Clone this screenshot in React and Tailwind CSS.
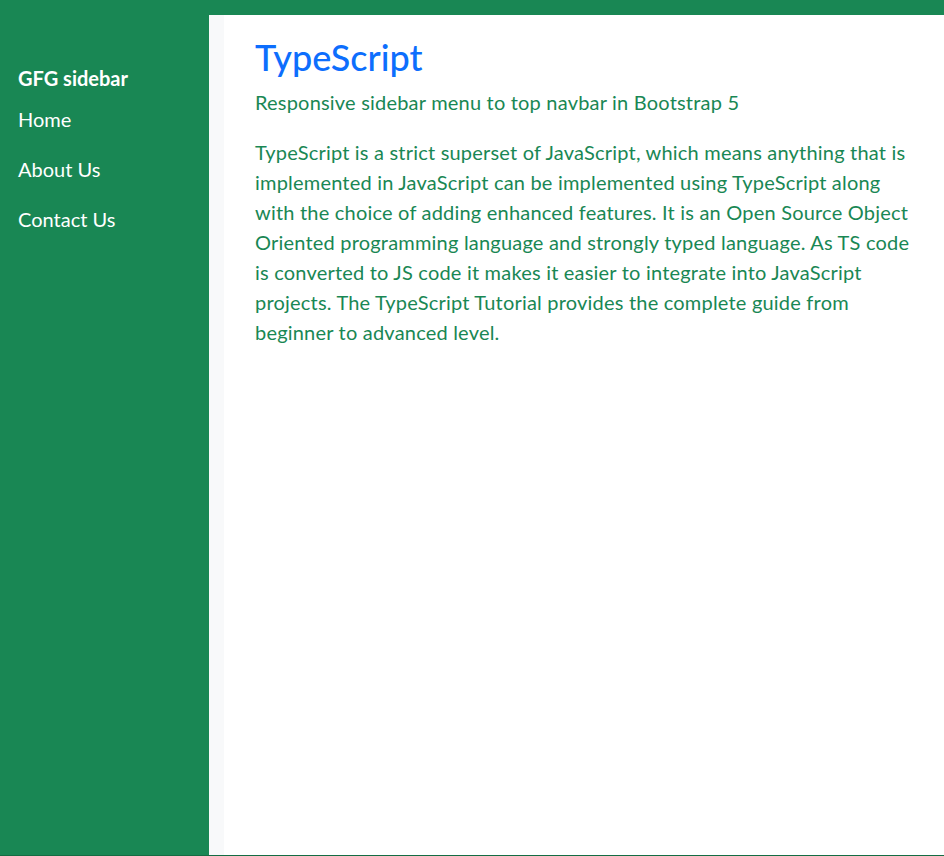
export default function App() {
  return (
    <div
      className="h-[856px] w-full flex flex-col bg-[#198754] border-b border-black/20"
      style={{ fontFamily: '"Lato", "Noto Sans", sans-serif' }}
    >
      <div className="h-[15px] shrink-0" />
      <div className="flex flex-1 min-h-0">
        {/* Sidebar */}
        <aside className="w-[209px] shrink-0 px-[18px] pt-[49px] text-white">
          <h5 className="text-[20px] font-bold leading-[28px] mb-[3px]">GFG sidebar</h5>
          <nav className="flex flex-col">
            <a href="#" className="text-[20px] leading-[30px] py-[10px] -mt-[1px]">Home</a>
            <a href="#" className="text-[20px] leading-[30px] py-[10px]">About Us</a>
            <a href="#" className="text-[20px] leading-[30px] py-[10px]">Contact Us</a>
          </nav>
        </aside>

        {/* Main */}
        <main className="flex-1 flex">
          <div className="w-[15px] bg-[#f8f9fa]" />
          <div className="flex-1 bg-white pl-[31px] pr-[30px] pt-[21px] tracking-[0.2px]">
            <h1 className="text-[36px] leading-[43px] text-[#0d6efd] font-medium tracking-normal mb-[8px]">TypeScript</h1>
            <p className="text-[20px] leading-[30px] text-[#198754] mb-[20px]">
              Responsive sidebar menu to top navbar in Bootstrap 5
            </p>
            <p className="text-[20px] leading-[30px] text-[#198754] max-w-[658px]">
              TypeScript is a strict superset of JavaScript, which means anything that is implemented in JavaScript can be implemented using TypeScript along with the choice of adding enhanced features. It is an Open Source Object Oriented programming language and strongly typed language. As TS code is converted to JS code it makes it easier to integrate into JavaScript projects. The TypeScript Tutorial provides the complete guide from beginner to advanced level.
            </p>
          </div>
        </main>
      </div>
    </div>
  );
}
